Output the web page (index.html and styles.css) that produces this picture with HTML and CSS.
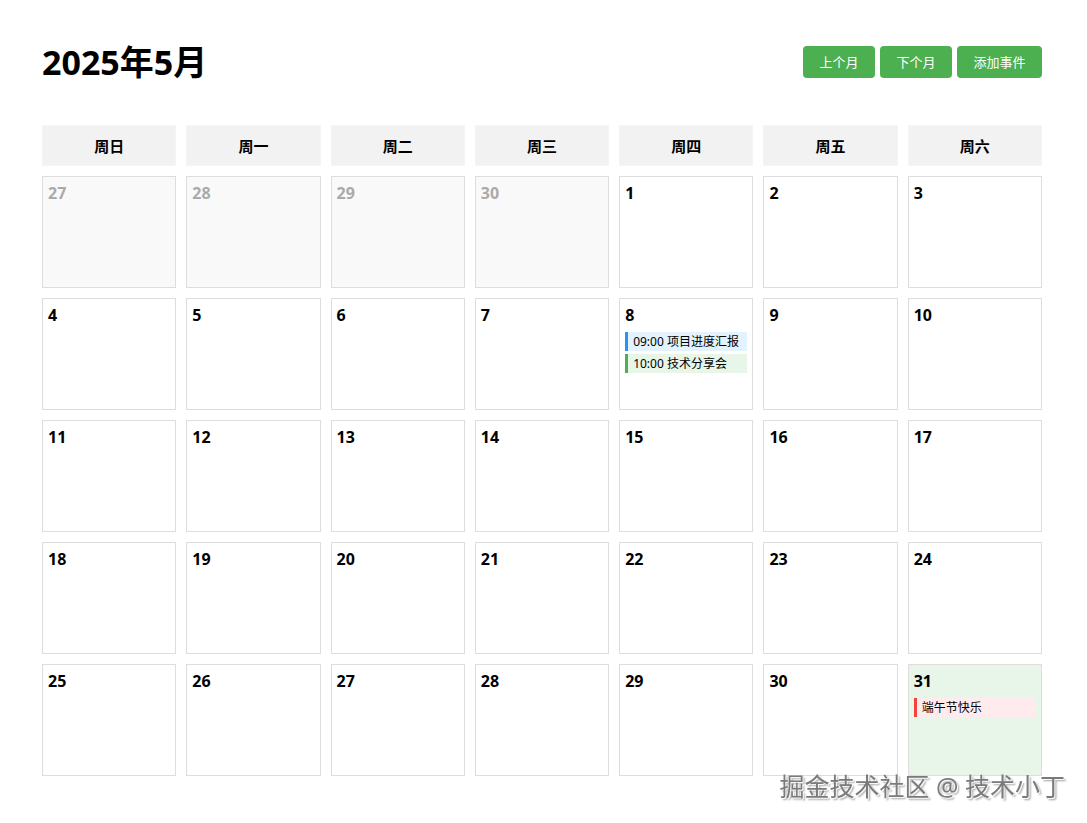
FILE: index.html
```html
<!DOCTYPE html>
<html lang="zh-CN">
<head>
    <meta charset="UTF-8">
    <meta name="viewport" content="width=device-width, initial-scale=1.0">
    <title>日历</title>
    <link rel="stylesheet" href="styles.css">
</head>
<body>
    <div class="calendar">
        <div class="calendar-header">
            <h1 class="month-title">2025年5月</h1>
            <div class="actions">
                <button class="btn">上个月</button>
                <button class="btn">下个月</button>
                <button class="btn">添加事件</button>
            </div>
        </div>

        <div class="calendar-grid">
            <div class="weekday">周日</div>
            <div class="weekday">周一</div>
            <div class="weekday">周二</div>
            <div class="weekday">周三</div>
            <div class="weekday">周四</div>
            <div class="weekday">周五</div>
            <div class="weekday">周六</div>

            <div class="day other-month"><div class="day-number">27</div></div>
            <div class="day other-month"><div class="day-number">28</div></div>
            <div class="day other-month"><div class="day-number">29</div></div>
            <div class="day other-month"><div class="day-number">30</div></div>
            <div class="day"><div class="day-number">1</div></div>
            <div class="day"><div class="day-number">2</div></div>
            <div class="day"><div class="day-number">3</div></div>

            <div class="day"><div class="day-number">4</div></div>
            <div class="day"><div class="day-number">5</div></div>
            <div class="day"><div class="day-number">6</div></div>
            <div class="day"><div class="day-number">7</div></div>
            <div class="day">
                <div class="day-number">8</div>
                <div class="event event-blue">09:00 项目进度汇报</div>
                <div class="event event-green">10:00 技术分享会</div>
            </div>
            <div class="day"><div class="day-number">9</div></div>
            <div class="day"><div class="day-number">10</div></div>

            <div class="day"><div class="day-number">11</div></div>
            <div class="day"><div class="day-number">12</div></div>
            <div class="day"><div class="day-number">13</div></div>
            <div class="day"><div class="day-number">14</div></div>
            <div class="day"><div class="day-number">15</div></div>
            <div class="day"><div class="day-number">16</div></div>
            <div class="day"><div class="day-number">17</div></div>

            <div class="day"><div class="day-number">18</div></div>
            <div class="day"><div class="day-number">19</div></div>
            <div class="day"><div class="day-number">20</div></div>
            <div class="day"><div class="day-number">21</div></div>
            <div class="day"><div class="day-number">22</div></div>
            <div class="day"><div class="day-number">23</div></div>
            <div class="day"><div class="day-number">24</div></div>

            <div class="day"><div class="day-number">25</div></div>
            <div class="day"><div class="day-number">26</div></div>
            <div class="day"><div class="day-number">27</div></div>
            <div class="day"><div class="day-number">28</div></div>
            <div class="day"><div class="day-number">29</div></div>
            <div class="day"><div class="day-number">30</div></div>
            <div class="day today">
                <div class="day-number">31</div>
                <div class="event event-red">端午节快乐</div>
            </div>
        </div>
    </div>

    <div class="watermark">掘金技术社区 @ 技术小丁</div>
</body>
</html>
```

FILE: styles.css
```css
body {
    font-family: "Noto Sans", "Noto Sans CJK SC", sans-serif;
    margin: 0;
    padding: 0;
    background-color: white;
    color: black;
}

.calendar {
    width: 1000px;
    margin-left: 42px;
    padding-top: 42px;
}

.calendar-header {
    display: flex;
    justify-content: space-between;
    align-items: center;
    margin-bottom: 43px;
}

.month-title {
    margin: 0;
    font-size: 34px;
    line-height: 40px;
    font-weight: bold;
}

.actions {
    display: flex;
    gap: 5px;
}

.btn {
    font-family: inherit;
    font-size: 13px;
    line-height: 16px;
    padding: 8px 16.5px;
    background-color: #4CAF50;
    color: white;
    border: none;
    border-radius: 4px;
    cursor: pointer;
}

.calendar-grid {
    display: grid;
    grid-template-columns: repeat(7, 1fr);
    gap: 10px;
}

.weekday {
    height: 41px;
    display: flex;
    align-items: center;
    justify-content: center;
    background-color: #f2f2f2;
    border: 1px solid #f5f5f5;
    box-sizing: border-box;
    font-size: 15px;
    font-weight: bold;
}

.day {
    min-height: 100px;
    padding: 5px;
    border: 1px solid #ddd;
}

.day-number {
    font-size: 16px;
    font-weight: bold;
    line-height: 22px;
    margin-bottom: 6px;
}

.other-month {
    background-color: #f9f9f9;
}

.other-month .day-number {
    color: #aaa;
}

.today {
    background-color: #e8f5e9;
}

.event {
    font-size: 12px;
    line-height: 15px;
    padding: 2px 5px;
    margin-bottom: 3px;
    border-left: 3px solid;
    white-space: nowrap;
    overflow: hidden;
}

.event-blue {
    background-color: #e3f2fd;
    border-left-color: #2196F3;
}

.event-green {
    background-color: #e8f5e9;
    border-left-color: #4CAF50;
}

.event-red {
    background-color: #ffebee;
    border-left-color: #f44336;
}

.watermark {
    position: fixed;
    right: 22px;
    bottom: 20px;
    font-size: 25px;
    color: #7a7a7a;
    text-shadow: 1px 1px 1px #fff, 2px 2px 2px rgba(0,0,0,0.4);
    pointer-events: none;
}
```
